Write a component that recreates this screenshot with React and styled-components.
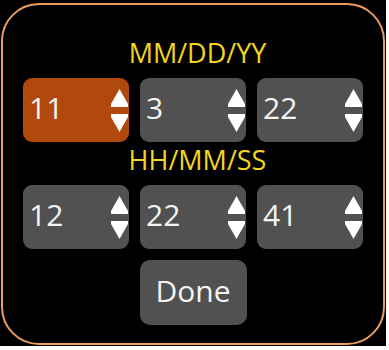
import React from "react";
import styled, { createGlobalStyle } from "styled-components";

const GlobalStyle = createGlobalStyle`
  body {
    margin: 0;
    background: #ffffff;
    font-family: "Open Sans", "Noto Sans", sans-serif;
  }
`;

const Backdrop = styled.div`
  width: 386px;
  height: 346px;
  box-sizing: border-box;
  padding: 3px 1px 1px 1px;
  background: #000;
`;

const Panel = styled.div`
  box-sizing: border-box;
  height: 342px;
  border: 2px solid #eb9c5e;
  border-radius: 38px;
  padding-top: 32px;
  display: flex;
  flex-direction: column;
  align-items: center;
`;

const Heading = styled.div`
  font-size: 27px;
  line-height: 32px;
  color: #f2d520;
  padding-left: 9px;
  margin-top: ${(p) => p.$top || 0}px;
  margin-bottom: 9px;
`;

const Row = styled.div`
  display: grid;
  grid-template-columns: repeat(3, 106px);
  gap: 11px;
`;

const Field = styled.div`
  height: 64px;
  border-radius: 9px;
  background: ${(p) => (p.$active ? "#b1480c" : "#515151")};
  display: flex;
  align-items: center;
  justify-content: space-between;
  padding: 0 1px 0 6px;
`;

const Value = styled.span`
  color: #f4f4f4;
  font-size: 30px;
  line-height: 34px;
  margin-bottom: 5px;
`;

const Spinner = styled.div`
  display: flex;
  flex-direction: column;
  gap: 7px;
  width: 17px;
  margin-top: 1px;
`;

const DoneButton = styled.button`
  margin-top: 11px;
  width: 107px;
  height: 65px;
  border: none;
  border-radius: 10px;
  background: #515151;
  color: #f4f4f4;
  font-family: "Open Sans", "Noto Sans", sans-serif;
  font-size: 30px;
  padding: 0 0 4px;
`;

const Arrow = ({ up }) => (
  <svg width="17" height="18" viewBox="0 0 17 18">
    {up ? (
      <polygon points="8.5,0 17,15 17,18 0,18 0,15" fill="#ffffff" />
    ) : (
      <polygon points="0,0 17,0 17,3 8.5,18 0,3" fill="#ffffff" />
    )}
  </svg>
);

const NumberField = ({ value, active }) => (
  <Field $active={active}>
    <Value>{value}</Value>
    <Spinner>
      <Arrow up />
      <Arrow />
    </Spinner>
  </Field>
);

export default function App() {
  return (
    <>
      <GlobalStyle />
      <Backdrop>
        <Panel>
          <Heading>MM/DD/YY</Heading>
          <Row>
            <NumberField value="11" active />
            <NumberField value="3" />
            <NumberField value="22" />
          </Row>
          <Heading $top={2}>HH/MM/SS</Heading>
          <Row>
            <NumberField value="12" />
            <NumberField value="22" />
            <NumberField value="41" />
          </Row>
          <DoneButton>Done</DoneButton>
        </Panel>
      </Backdrop>
    </>
  );
}
